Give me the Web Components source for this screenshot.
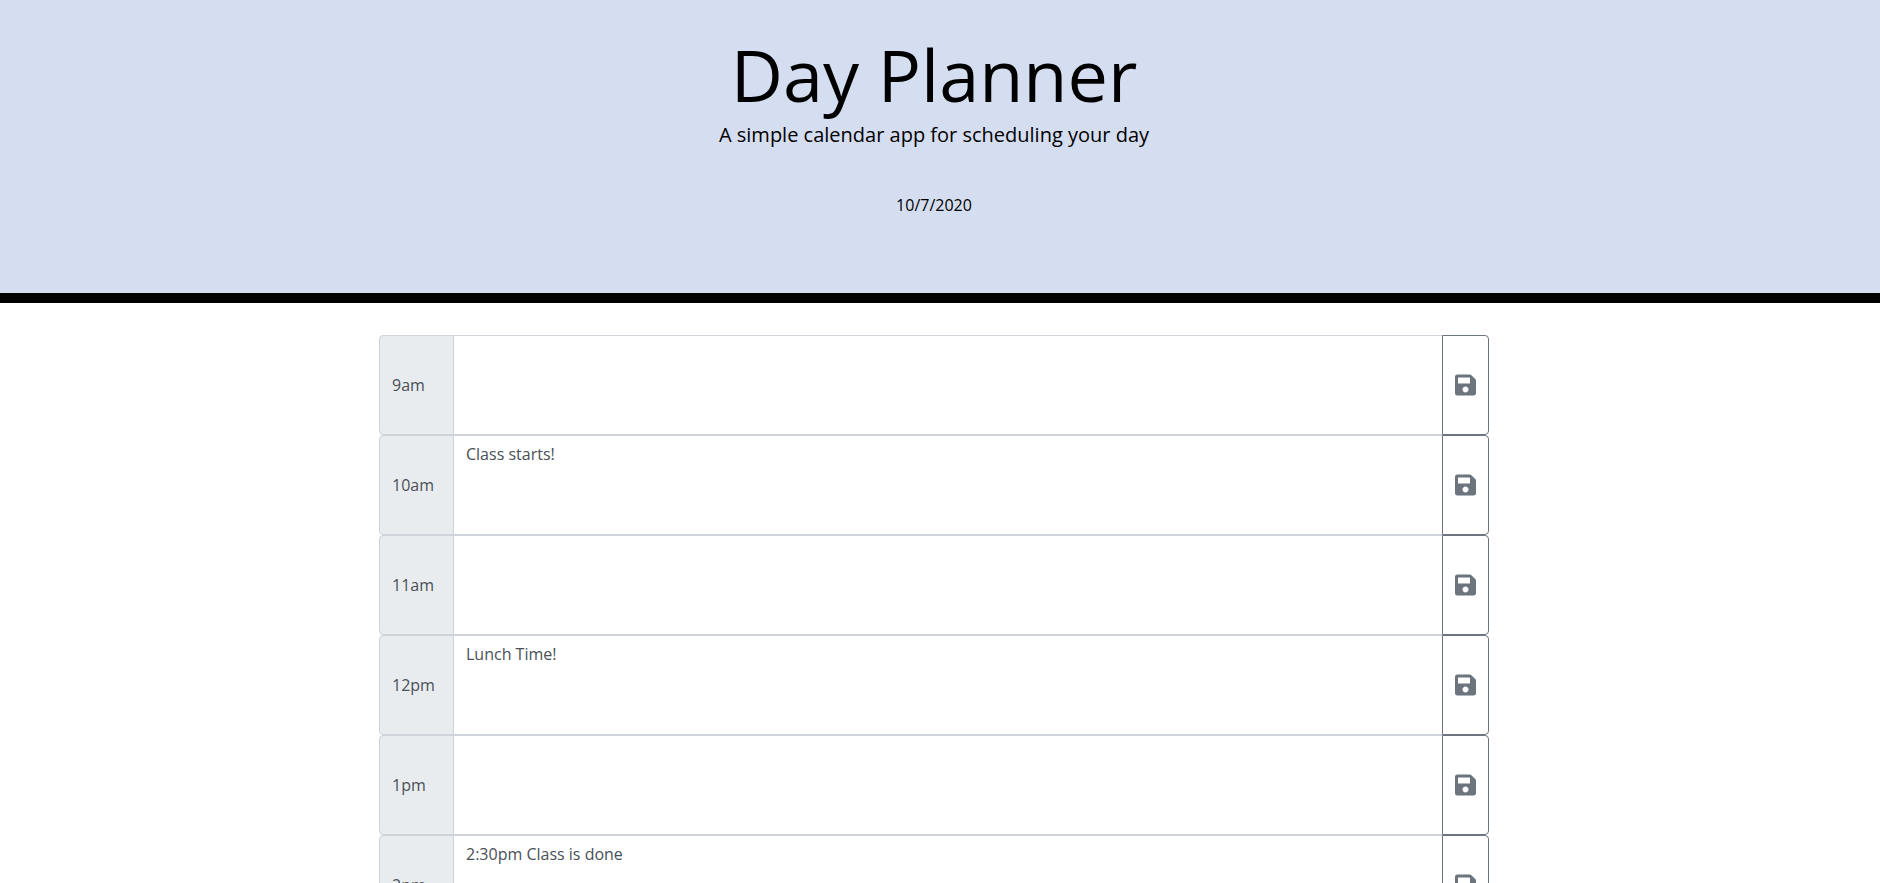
<!DOCTYPE html>
<html lang="en">
<head>
<meta charset="utf-8">
<meta name="viewport" content="width=device-width, initial-scale=1">
<title>Day Planner</title>
<style>
  html, body { margin: 0; }
  body {
    height: 100vh;
    overflow: hidden;
    background: #fff;
    color: #000;
    font: 16px/24px "Open Sans", sans-serif;
  }
</style>
</head>
<body>
<planner-app>
  <planner-header>
    <span slot="title">Day Planner</span>
    <span slot="lead">A simple calendar app for scheduling your day</span>
    <span slot="date">10/7/2020</span>
  </planner-header>
  <time-block hour="9am"></time-block>
  <time-block hour="10am" entry="Class starts!"></time-block>
  <time-block hour="11am"></time-block>
  <time-block hour="12pm" entry="Lunch Time!"></time-block>
  <time-block hour="1pm"></time-block>
  <time-block hour="2pm" entry="2:30pm Class is done"></time-block>
</planner-app>

<template id="app-template">
  <style>
    :host { display: block; --gutter: 12px; }
    main {
      box-sizing: border-box;
      width: calc(100% - var(--gutter));
      padding: 32px 15px;
    }
    .rows { max-width: 1110px; margin: 0 auto; }
  </style>
  <slot name="header"></slot>
  <main><div class="rows"><slot></slot></div></main>
</template>

<template id="header-template">
  <style>
    :host { display: block; }
    header {
      display: flex;
      flex-direction: column;
      align-items: center;
      padding: 30px calc(24px + var(--gutter, 0px)) 76px 24px;
      background: #d5ddf0;
      border-bottom: 10px solid #000;
      text-align: center;
    }
    h1, p { margin: 0; font-weight: 400; }
    h1 { font-size: 72px; line-height: 88px; }
    .lead { margin-top: 2px; font-size: 20px; line-height: 30px; }
    .date { margin-top: 43px; }
  </style>
  <header>
    <h1><slot name="title"></slot></h1>
    <p class="lead"><slot name="lead"></slot></p>
    <p class="date"><slot name="date"></slot></p>
  </header>
</template>

<template id="block-template">
  <style>
    :host { display: block; }
    .row { display: flex; min-height: 100px; color: #495057; }
    label, textarea, button { box-sizing: border-box; margin: 0; font: inherit; }
    label {
      display: flex;
      align-items: center;
      flex: 0 0 75px;
      padding: 6px 12px;
      background: #e9ecef;
      border: 1px solid #ced4da;
      border-radius: 4px 0 0 4px;
    }
    textarea {
      flex: 1;
      min-width: 0;
      height: 100px;
      margin: 0 -1px;
      padding: 6px 12px;
      border: 1px solid #ced4da;
      border-radius: 0;
      background: #fff;
      color: inherit;
      resize: none;
      outline: none;
    }
    button {
      position: relative;
      display: flex;
      align-items: center;
      padding: 6px 12px;
      border: 1px solid #6c757d;
      border-radius: 0 4px 4px 0;
      background: transparent;
      color: #6c757d;
      cursor: pointer;
    }
    svg { display: block; width: 21px; height: 24px; fill: currentColor; }
  </style>
  <div class="row">
    <label for="entry"></label>
    <textarea id="entry" spellcheck="false"></textarea>
    <button type="button" aria-label="Save">
      <svg viewBox="0 0 448 512" aria-hidden="true"><path d="M433.941 129.941l-83.882-83.882A48 48 0 0 0 316.118 32H48C21.49 32 0 53.49 0 80v352c0 26.51 21.49 48 48 48h352c26.51 0 48-21.49 48-48V163.882a48 48 0 0 0-14.059-33.941zM224 416c-35.346 0-64-28.654-64-64 0-35.346 28.654-64 64-64s64 28.654 64 64c0 35.346-28.654 64-64 64zm96-304.52V212c0 6.627-5.373 12-12 12H76c-6.627 0-12-5.373-12-12V108c0-6.627 5.373-12 12-12h228.52c3.183 0 6.235 1.264 8.485 3.515l3.48 3.48A11.996 11.996 0 0 1 320 111.48z"/></svg>
    </button>
  </div>
</template>

<script>
  class TemplateElement extends HTMLElement {
    constructor() {
      super();
      const template = document.getElementById(this.constructor.template);
      this.attachShadow({ mode: "open" }).append(template.content.cloneNode(true));
    }
  }

  class PlannerApp extends TemplateElement {
    static template = "app-template";
    connectedCallback() {
      this.querySelector("planner-header").slot = "header";
    }
  }

  class PlannerHeader extends TemplateElement {
    static template = "header-template";
  }

  class TimeBlock extends TemplateElement {
    static template = "block-template";
    connectedCallback() {
      this.shadowRoot.querySelector("label").textContent = this.getAttribute("hour");
      this.shadowRoot.querySelector("textarea").value = this.getAttribute("entry") || "";
    }
  }

  customElements.define("planner-app", PlannerApp);
  customElements.define("planner-header", PlannerHeader);
  customElements.define("time-block", TimeBlock);
</script>
</body>
</html>
